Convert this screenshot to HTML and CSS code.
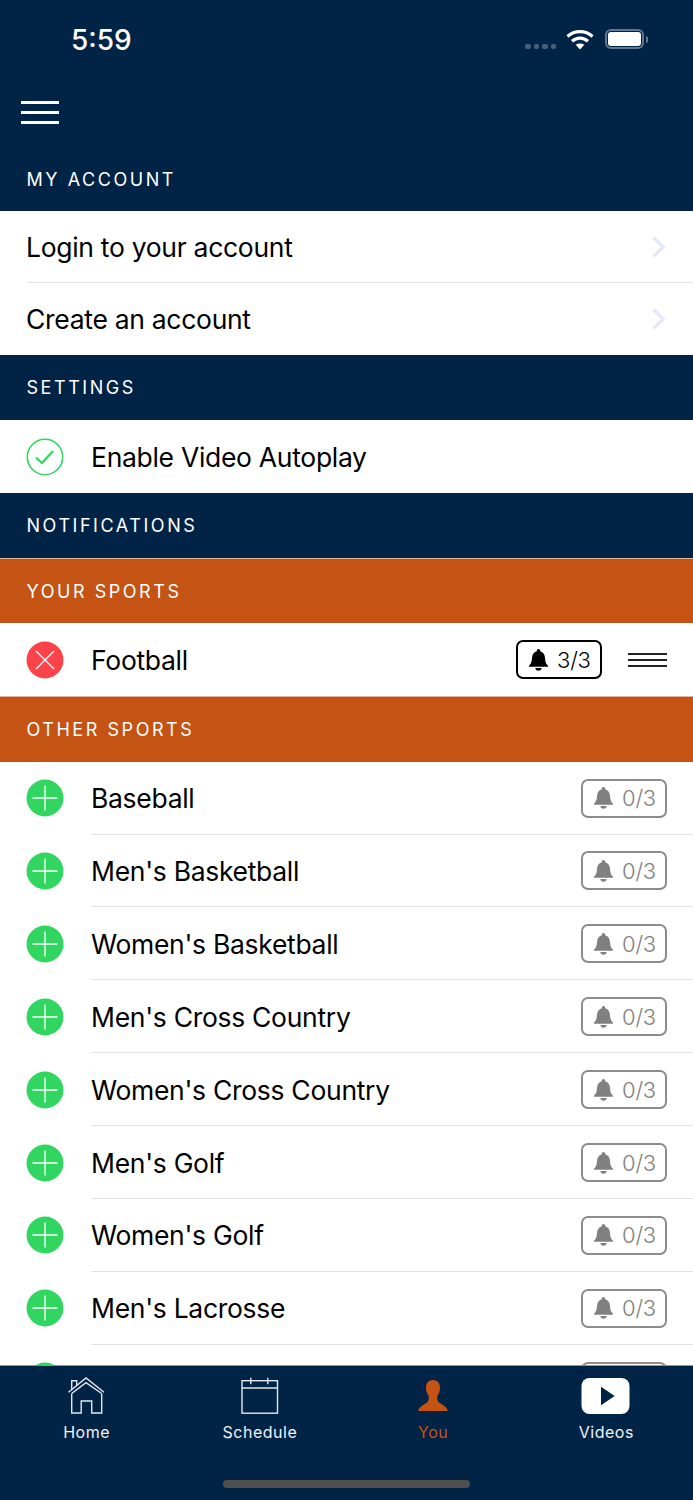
FILE: index.html
```html
<!DOCTYPE html>
<html lang="en">
<head>
  <meta charset="UTF-8" />
  <meta name="viewport" content="width=device-width, initial-scale=1.0" />
  <title>You</title>
  <link rel="stylesheet" href="styles.css">
</head>
<body>
  <svg class="defs" width="0" height="0">
    <symbol id="bell" viewBox="0 0 20 22">
      <path d="M10 0.500c-1 0-1.600 0.700-1.600 1.600v0.500C5.300 3.400 4 6 3.800 9c-0.200 3.500-0.800 5.500-2.800 7.200v1.300h18v-1.300c-2-1.700-2.600-3.700-2.800-7.200-0.200-3-1.500-5.600-4.600-6.400v-0.500c0-0.900-0.600-1.600-1.600-1.600z"/>
      <path d="M7 18.700h6c0 1.500-1.300 2.600-3 2.600s-3-1.100-3-2.600z"/>
    </symbol>
    <symbol id="plus" viewBox="0 0 38 38">
      <circle cx="19" cy="19" r="18.500" fill="#31d661"/>
      <path d="M6.500 19h25M19 6.500v25" stroke="#fff" stroke-width="1.300" fill="none"/>
    </symbol>
  </svg>

  <div id="app">
    <div class="top">
      <div class="status-bar">
        <span class="time">5:59</span>
        <div class="status-icons">
          <div class="signal"><i></i><i></i><i></i><i></i></div>
          <svg class="wifi" width="28" height="21" viewBox="0 0 28 21">
            <path d="M1.500 7.500C8.500 1 19.500 1 26.500 7.500" stroke="#fff" stroke-width="3.200" fill="none"/>
            <path d="M6 12.200c4.700-4.200 11.300-4.200 16 0" stroke="#fff" stroke-width="3.200" fill="none"/>
            <path d="M14 20.500l-4.300-4.700c2.600-1.900 6-1.900 8.600 0z" fill="#fff"/>
          </svg>
          <div class="battery"><div class="battery-fill"></div></div>
          <div class="battery-cap"></div>
        </div>
      </div>
      <div class="menu-btn"><span></span><span></span><span></span></div>
      <div class="section-title top-title">MY ACCOUNT</div>
    </div>

    <div class="list">
      <div class="row link-row first">Login to your account
        <svg class="chev" width="13" height="22" viewBox="0 0 13 22"><path d="M1.500 1.500L11 11l-9.500 9.500" stroke="#e8e8fb" stroke-width="3.500" fill="none"/></svg>
      </div>
      <div class="row link-row">Create an account
        <svg class="chev" width="13" height="22" viewBox="0 0 13 22"><path d="M1.500 1.500L11 11l-9.500 9.500" stroke="#e8e8fb" stroke-width="3.500" fill="none"/></svg>
      </div>

      <div class="section-title">SETTINGS</div>
      <div class="row icon-row">
        <svg class="ic" viewBox="0 0 38 38">
          <circle cx="19" cy="19" r="17.700" fill="none" stroke="#31d661" stroke-width="1.600"/>
          <path d="M10 19.500l6 5.500 11-12" stroke="#31d661" stroke-width="2.300" fill="none"/>
        </svg>
        <span class="name">Enable Video Autoplay</span>
      </div>

      <div class="section-title">NOTIFICATIONS</div>
      <div class="section-title orange">YOUR SPORTS</div>
      <div class="row icon-row sport">
        <svg class="ic" viewBox="0 0 38 38">
          <circle cx="19" cy="19" r="18.500" fill="#fb4349"/>
          <path d="M10 10l18 18M28 10L10 28" stroke="#fff" stroke-width="1.300"/>
        </svg>
        <span class="name">Football</span>
        <div class="badge on"><svg class="bell"><use href="#bell"/></svg>3/3</div>
        <div class="drag"><span></span><span></span><span></span></div>
      </div>

      <div class="section-title orange">OTHER SPORTS</div>
      <div class="row icon-row sport sep"><svg class="ic"><use href="#plus"/></svg><span class="name">Baseball</span><div class="badge"><svg class="bell"><use href="#bell"/></svg>0/3</div></div>
      <div class="row icon-row sport sep"><svg class="ic"><use href="#plus"/></svg><span class="name">Men's Basketball</span><div class="badge"><svg class="bell"><use href="#bell"/></svg>0/3</div></div>
      <div class="row icon-row sport sep"><svg class="ic"><use href="#plus"/></svg><span class="name">Women's Basketball</span><div class="badge"><svg class="bell"><use href="#bell"/></svg>0/3</div></div>
      <div class="row icon-row sport sep"><svg class="ic"><use href="#plus"/></svg><span class="name">Men's Cross Country</span><div class="badge"><svg class="bell"><use href="#bell"/></svg>0/3</div></div>
      <div class="row icon-row sport sep"><svg class="ic"><use href="#plus"/></svg><span class="name">Women's Cross Country</span><div class="badge"><svg class="bell"><use href="#bell"/></svg>0/3</div></div>
      <div class="row icon-row sport sep"><svg class="ic"><use href="#plus"/></svg><span class="name">Men's Golf</span><div class="badge"><svg class="bell"><use href="#bell"/></svg>0/3</div></div>
      <div class="row icon-row sport sep"><svg class="ic"><use href="#plus"/></svg><span class="name">Women's Golf</span><div class="badge"><svg class="bell"><use href="#bell"/></svg>0/3</div></div>
      <div class="row icon-row sport sep"><svg class="ic"><use href="#plus"/></svg><span class="name">Men's Lacrosse</span><div class="badge"><svg class="bell"><use href="#bell"/></svg>0/3</div></div>
      <div class="row icon-row sport"><svg class="ic"><use href="#plus"/></svg><div class="badge push"><svg class="bell"><use href="#bell"/></svg>0/3</div></div>
    </div>

    <div class="tabbar">
      <div class="tabs">
        <div class="tab">
          <svg width="38" height="38" viewBox="0 0 38 38" fill="none" stroke="#e4e7ee" stroke-width="1.400">
            <path d="M0.500 15.300L18 1l18 14.300"/>
            <path d="M3.700 16.500L18 5.700l15.700 10.800"/>
            <path d="M3.700 13V3.700h5v4.500"/>
            <path d="M3.700 16.500V36h9.500V24h10.500v12h10V16.500"/>
          </svg>
          <span>Home</span>
        </div>
        <div class="tab">
          <svg width="38" height="38" viewBox="0 0 38 38" fill="none" stroke="#e4e7ee" stroke-width="1.400">
            <rect x="1" y="3.700" width="35.500" height="32.500"/>
            <path d="M1 11h35.500M9.800 0.700v6.500M26.800 0.700v6.500"/>
          </svg>
          <span>Schedule</span>
        </div>
        <div class="tab active">
          <svg width="38" height="38" viewBox="0 0 38 38" fill="#c45314">
            <path d="M19 3c-4.500 0-7 3-7 7.500 0 3.500 1 6 2.300 7.800 0.800 1.200 0.700 5-0.800 6.700-2 2-7.500 3.500-9.500 9h30c-2-5.500-7.500-7-9.500-9-1.500-1.700-1.600-5.500-0.800-6.700 1.300-1.800 2.300-4.300 2.300-7.800 0-4.500-2.500-7.500-7-7.500z"/>
          </svg>
          <span>You</span>
        </div>
        <div class="tab">
          <svg width="50" height="38" viewBox="0 0 50 38">
            <rect x="0.500" y="1" width="48" height="36" rx="8" fill="#fff"/>
            <path d="M20 9.700L33.700 19 20 28.300z" fill="#012346"/>
          </svg>
          <span>Videos</span>
        </div>
      </div>
      <div class="home-indicator"></div>
    </div>
  </div>
</body>
</html>
```

FILE: styles.css
```css
:root {
  --navy: #012346;
  --orange: #c45314;
  --line: #e2e2e4;
}
* {
  box-sizing: border-box;
}
body {
  margin: 0;
  font-family: Inter, "Liberation Sans", sans-serif;
  background: #fff;
  color: #000;
}
.defs {
  display: block;
  height: 0;
}
#app {
  height: 1500px;
  display: flex;
  flex-direction: column;
  overflow: hidden;
}
.top {
  background: var(--navy);
  height: 211px;
  flex: none;
  color: #fff;
}
.status-bar {
  height: 79px;
  padding: 24px 45px 0 71px;
  display: flex;
  justify-content: space-between;
}
.time {
  font-size: 28px;
  line-height: 32px;
  font-weight: 500;
}
.status-icons {
  display: flex;
  align-items: center;
  height: 30px;
}
.signal {
  display: flex;
  gap: 3px;
  margin-right: 10px;
  padding-top: 15px;
}
.signal i {
  width: 5.500px;
  height: 5.500px;
  border-radius: 2px;
  background: #47607a;
}
.wifi {
  margin-right: 11px;
}
.battery {
  width: 39px;
  height: 20px;
  border: 2px solid #5f7792;
  border-radius: 6px;
  padding: 1px;
}
.battery-fill {
  height: 100%;
  background: #fff;
  border-radius: 3px;
}
.battery-cap {
  width: 2px;
  height: 7px;
  margin-left: 2px;
  background: #5f7792;
  border-radius: 0 2px 2px 0;
}
.menu-btn {
  margin: 22px 0 0 21px;
  width: 38px;
  height: 23px;
  display: flex;
  flex-direction: column;
  justify-content: space-between;
}
.menu-btn span {
  height: 3px;
  background: #fff;
}
.section-title {
  height: 65.200px;
  flex: none;
  background: var(--navy);
  color: #fff;
  padding: 21px 0 0 26.500px;
  font-size: 18px;
  line-height: 24px;
  letter-spacing: 2.550px;
}
.top-title {
  padding-top: 44px;
  height: auto;
  background: none;
}
.section-title.orange {
  height: 65.300px;
  background: var(--orange);
  border-top: 1px solid #e0b59c;
}
.list {
  flex: 1;
  overflow: hidden;
  min-height: 0;
}
.row {
  height: 72.800px;
  flex: none;
  display: flex;
  align-items: center;
  font-size: 26.500px;
  letter-spacing: -0.300px;
  background: #fff;
  padding: 0 26px;
  position: relative;
}
.row.sport {
  height: 72.900px;
}
.link-row {
  height: 72px;
  justify-content: space-between;
  padding-right: 28px;
}
.link-row.first::after {
  content: "";
  position: absolute;
  left: 27px;
  right: 0;
  bottom: 0;
  height: 1px;
  background: var(--line);
}
.sep::after {
  content: "";
  position: absolute;
  left: 91px;
  right: 0;
  bottom: 0;
  height: 1px;
  background: var(--line);
}
.ic {
  width: 38px;
  height: 38px;
  flex: none;
  margin-right: 27px;
}
.name {
  flex: 1;
}
.badge {
  width: 86px;
  height: 39px;
  border: 2px solid #8c8c8c;
  border-radius: 7px;
  color: #808080;
  font-size: 22px;
  font-weight: 300;
  letter-spacing: -0.200px;
  display: flex;
  align-items: center;
  padding-left: 10px;
  gap: 8px;
  flex: none;
}
.badge.push {
  margin-left: auto;
}
.badge.on {
  border-color: #000;
  color: #000;
}
.bell {
  width: 21px;
  height: 24px;
  fill: #808080;
  flex: none;
}
.on .bell {
  fill: #000;
}
.drag {
  width: 39px;
  height: 14px;
  margin-left: 26px;
  display: flex;
  flex-direction: column;
  justify-content: space-between;
}
.drag span {
  height: 2px;
  background: #222;
}
.tabbar {
  height: 135px;
  flex: none;
  background: var(--navy);
  border-top: 1px solid #8c96a3;
  display: flex;
  flex-direction: column;
}
.tabs {
  display: flex;
  padding-top: 11px;
}
.tab {
  flex: 1;
  display: flex;
  flex-direction: column;
  align-items: center;
  color: #f0f2f5;
  font-size: 16px;
  line-height: 20px;
  font-weight: 400;
  letter-spacing: 0.500px;
  gap: 7px;
}
.tab.active {
  color: var(--orange);
}
.home-indicator {
  width: 247px;
  height: 8px;
  border-radius: 4px;
  background: #4f4f4f;
  margin: 38px 0 0 223px;
}
```
